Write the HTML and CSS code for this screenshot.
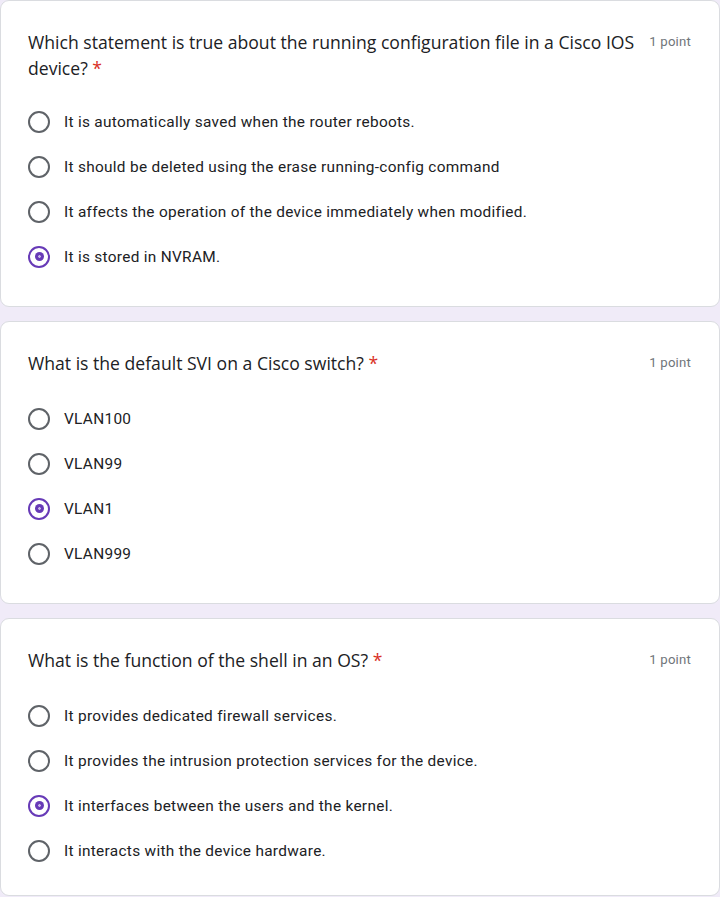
FILE: index.html
```html
<!DOCTYPE html>
<html lang="en">
<head>
<meta charset="utf-8">
<title>Quiz</title>
<link rel="stylesheet" href="styles.css">
</head>
<body>
<main class="form">
  <section class="card">
    <div class="q-head">
      <div class="q-title">Which statement is true about the running configuration file in a Cisco IOS device? <span class="req">*</span></div>
      <div class="q-points">1 point</div>
    </div>
    <ul class="options">
      <li class="option"><span class="radio"></span><span class="opt-text">It is automatically saved when the router reboots.</span></li>
      <li class="option"><span class="radio"></span><span class="opt-text">It should be deleted using the erase running-config command</span></li>
      <li class="option"><span class="radio"></span><span class="opt-text">It affects the operation of the device immediately when modified.</span></li>
      <li class="option"><span class="radio checked"></span><span class="opt-text">It is stored in NVRAM.</span></li>
    </ul>
  </section>

  <section class="card">
    <div class="q-head">
      <div class="q-title">What is the default SVI on a Cisco switch? <span class="req">*</span></div>
      <div class="q-points">1 point</div>
    </div>
    <ul class="options">
      <li class="option"><span class="radio"></span><span class="opt-text">VLAN100</span></li>
      <li class="option"><span class="radio"></span><span class="opt-text">VLAN99</span></li>
      <li class="option"><span class="radio checked"></span><span class="opt-text">VLAN1</span></li>
      <li class="option"><span class="radio"></span><span class="opt-text">VLAN999</span></li>
    </ul>
  </section>

  <section class="card">
    <div class="q-head">
      <div class="q-title">What is the function of the shell in an OS? <span class="req">*</span></div>
      <div class="q-points">1 point</div>
    </div>
    <ul class="options">
      <li class="option"><span class="radio"></span><span class="opt-text">It provides dedicated firewall services.</span></li>
      <li class="option"><span class="radio"></span><span class="opt-text">It provides the intrusion protection services for the device.</span></li>
      <li class="option"><span class="radio checked"></span><span class="opt-text">It interfaces between the users and the kernel.</span></li>
      <li class="option"><span class="radio"></span><span class="opt-text">It interacts with the device hardware.</span></li>
    </ul>
  </section>
</main>
</body>
</html>
```

FILE: styles.css
```css
html, body {
  margin: 0;
  padding: 0;
}

body {
  background: #f0ebf8;
  font-family: Roboto, "Liberation Sans", Arial, sans-serif;
  color: #202124;
}

.form {
  display: flex;
  flex-direction: column;
  gap: 14px;
}

.card {
  background: #fff;
  border: 1px solid #dadce0;
  border-radius: 9px;
  padding: 28px 28px 27px 27px;
}

.card:last-child {
  padding-bottom: 22px;
}

.q-head {
  display: flex;
  align-items: flex-start;
  gap: 9px;
  min-height: 28px;
}

.q-title {
  flex: 1;
  font-family: "Open Sans", "Liberation Sans", sans-serif;
  font-size: 17.6px;
  line-height: 26px;
  letter-spacing: 0;
  color: #202124;
}

.req {
  color: #d93025;
}

.q-points {
  font-family: Roboto, "Liberation Sans", sans-serif;
  font-size: 13.2px;
  line-height: 26px;
  letter-spacing: 0.2px;
  color: #70757a;
  white-space: nowrap;
}

.options {
  list-style: none;
  margin: 18px 0 0;
  padding: 0;
}

.option {
  display: flex;
  align-items: center;
  height: 45px;
}

.radio {
  box-sizing: border-box;
  width: 22px;
  height: 22px;
  border: 2.2px solid #5f6368;
  border-radius: 50%;
  margin-right: 14px;
  display: flex;
  align-items: center;
  justify-content: center;
  flex: none;
}

.radio.checked {
  border-color: #673ab7;
}

.radio.checked::after {
  content: "";
  width: 9px;
  height: 9px;
  border-radius: 50%;
  background: radial-gradient(circle, #c9b8e8 0 1px, #673ab7 1.6px);
}

.opt-text {
  font-family: Roboto, "Liberation Sans", sans-serif;
  font-size: 15.4px;
  letter-spacing: 0.3px;
  color: #202124;
}
```
